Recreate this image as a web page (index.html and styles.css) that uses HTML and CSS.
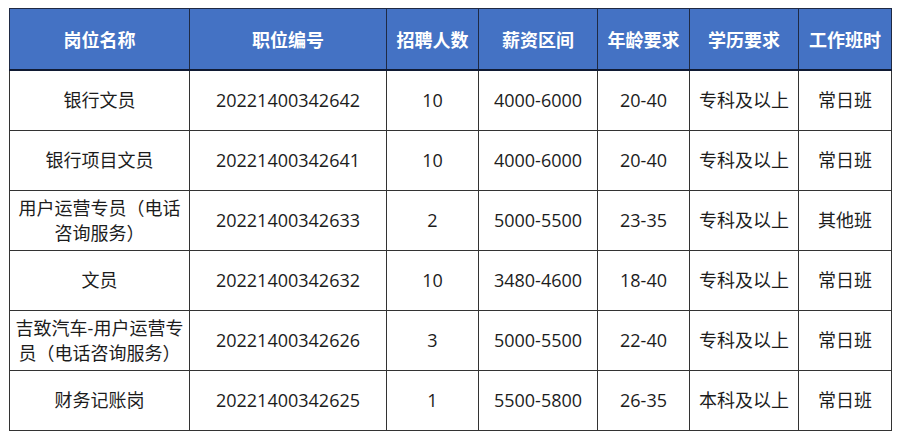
FILE: index.html
```html
<!DOCTYPE html>
<html lang="zh-CN">
<head>
<meta charset="utf-8">
<link rel="stylesheet" href="styles.css">
</head>
<body>
<table class="jobs">
  <colgroup>
    <col class="c1"><col class="c2"><col class="c3"><col class="c4"><col class="c5"><col class="c6"><col class="c7">
  </colgroup>
  <thead>
    <tr class="head">
      <th>岗位名称</th><th>职位编号</th><th>招聘人数</th><th>薪资区间</th><th>年龄要求</th><th>学历要求</th><th>工作班时</th>
    </tr>
  </thead>
  <tbody>
    <tr><td>银行文员</td><td>20221400342642</td><td>10</td><td>4000-6000</td><td>20-40</td><td>专科及以上</td><td>常日班</td></tr>
    <tr><td>银行项目文员</td><td>20221400342641</td><td>10</td><td>4000-6000</td><td>20-40</td><td>专科及以上</td><td>常日班</td></tr>
    <tr><td>用户运营专员（电话咨询服务）</td><td>20221400342633</td><td>2</td><td>5000-5500</td><td>23-35</td><td>专科及以上</td><td>其他班</td></tr>
    <tr><td>文员</td><td>20221400342632</td><td>10</td><td>3480-4600</td><td>18-40</td><td>专科及以上</td><td>常日班</td></tr>
    <tr><td>吉致汽车-用户运营专员（电话咨询服务）</td><td>20221400342626</td><td>3</td><td>5000-5500</td><td>22-40</td><td>专科及以上</td><td>常日班</td></tr>
    <tr><td>财务记账岗</td><td>20221400342625</td><td>1</td><td>5500-5800</td><td>26-35</td><td>本科及以上</td><td>常日班</td></tr>
  </tbody>
</table>
</body>
</html>
```
FILE: styles.css
```css
html, body {
  margin: 0;
  padding: 0;
  background: #ffffff;
}
body {
  padding: 8px 9px 0 9px;
  font-family: "Open Sans", "Noto Sans CJK SC", sans-serif;
}
.jobs {
  border-collapse: collapse;
  table-layout: fixed;
  width: 882px;
  color: #1c1c1c;
  font-size: 18px;
}
.c1 { width: 180px; }
.c2 { width: 197px; }
.c3 { width: 92px; }
.c4 { width: 119px; }
.c5 { width: 92px; }
.c6 { width: 109px; }
.c7 { width: 93px; }
.jobs th {
  background: #4472c4;
  color: #ffffff;
  font-weight: 700;
  font-family: "Noto Sans CJK SC", sans-serif;
  border: 1px solid #1f2a44;
  border-bottom: 2px solid #101a33;
  height: 60px;
  padding: 0;
  text-align: center;
  vertical-align: middle;
}
.jobs td {
  border: 1px solid #333333;
  height: 59px;
  padding: 0 2px;
  text-align: center;
  vertical-align: middle;
  line-height: 25px;
}
```
